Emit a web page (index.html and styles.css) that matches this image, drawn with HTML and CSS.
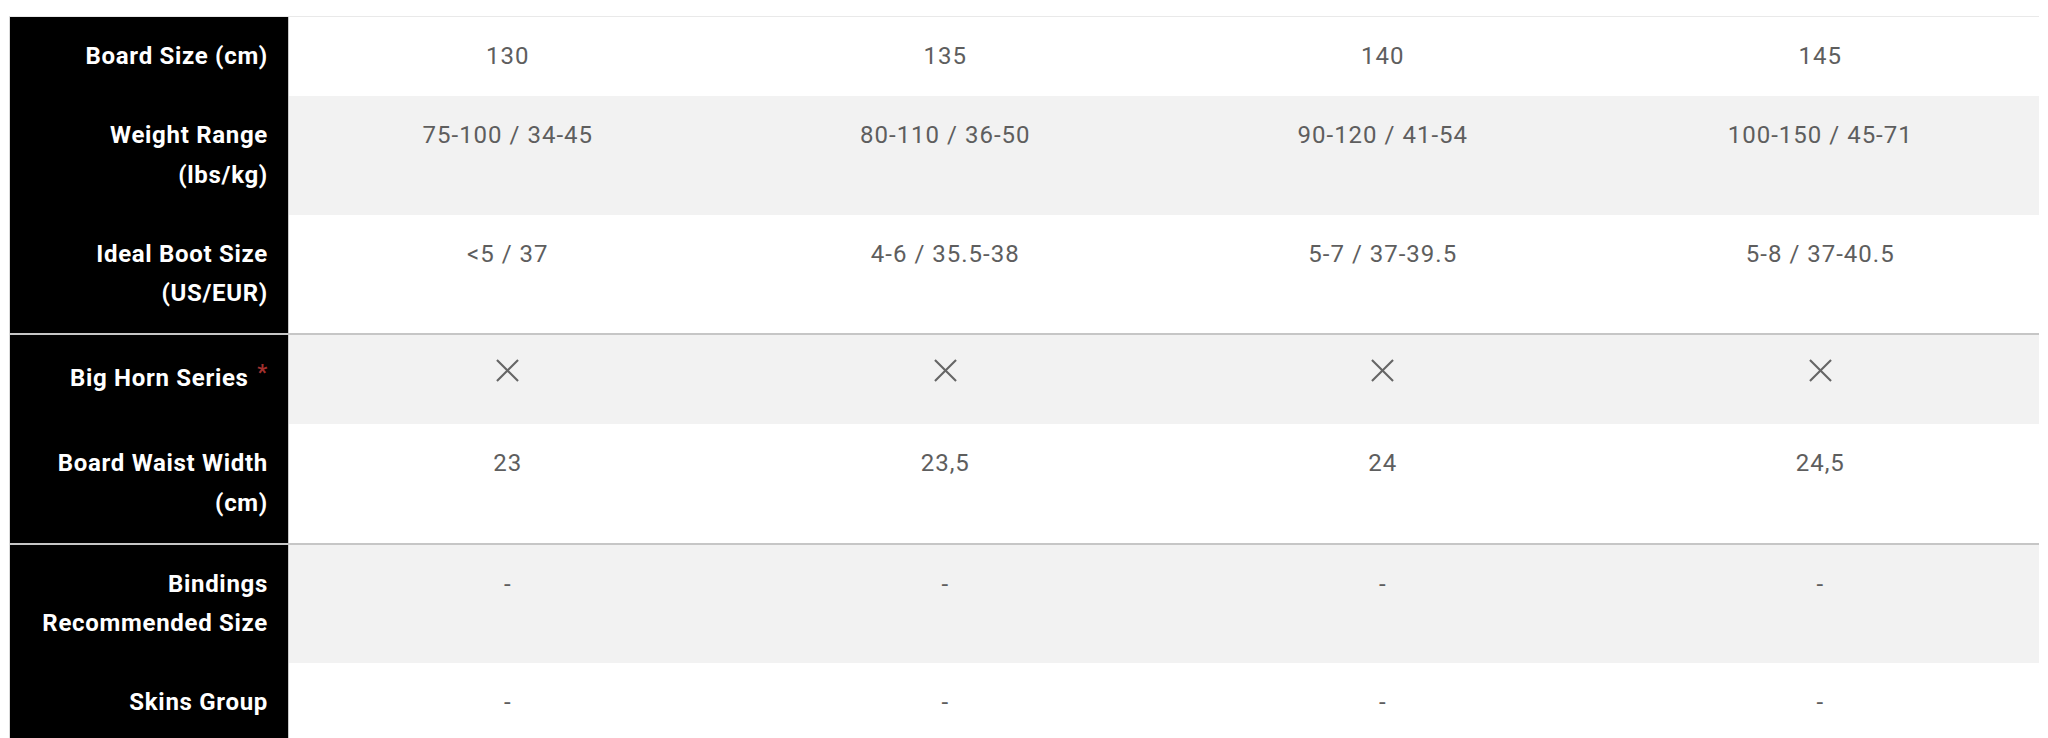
FILE: index.html
```html
<!DOCTYPE html>
<html lang="en">
<head>
<meta charset="utf-8">
<title>Size Chart</title>
<link rel="stylesheet" href="styles.css">
</head>
<body>
<div class="chart">
  <div class="row">
    <div class="label">Board Size (cm)</div>
    <div class="cell">130</div>
    <div class="cell">135</div>
    <div class="cell">140</div>
    <div class="cell">145</div>
  </div>
  <div class="row alt">
    <div class="label">Weight Range<br>(lbs/kg)</div>
    <div class="cell">75-100 / 34-45</div>
    <div class="cell">80-110 / 36-50</div>
    <div class="cell">90-120 / 41-54</div>
    <div class="cell">100-150 / 45-71</div>
  </div>
  <div class="row">
    <div class="label">Ideal Boot Size<br>(US/EUR)</div>
    <div class="cell">&lt;5 / 37</div>
    <div class="cell">4-6 / 35.5-38</div>
    <div class="cell">5-7 / 37-39.5</div>
    <div class="cell">5-8 / 37-40.5</div>
  </div>
  <div class="row alt section icon-row">
    <div class="label">Big Horn Series <sup class="req">*</sup></div>
    <div class="cell"><svg class="x" viewBox="0 0 24 24"><path d="M1 1L23 23M23 1L1 23"/></svg></div>
    <div class="cell"><svg class="x" viewBox="0 0 24 24"><path d="M1 1L23 23M23 1L1 23"/></svg></div>
    <div class="cell"><svg class="x" viewBox="0 0 24 24"><path d="M1 1L23 23M23 1L1 23"/></svg></div>
    <div class="cell"><svg class="x" viewBox="0 0 24 24"><path d="M1 1L23 23M23 1L1 23"/></svg></div>
  </div>
  <div class="row">
    <div class="label">Board Waist Width<br>(cm)</div>
    <div class="cell">23</div>
    <div class="cell">23,5</div>
    <div class="cell">24</div>
    <div class="cell">24,5</div>
  </div>
  <div class="row alt section">
    <div class="label">Bindings<br>Recommended Size</div>
    <div class="cell">-</div>
    <div class="cell">-</div>
    <div class="cell">-</div>
    <div class="cell">-</div>
  </div>
  <div class="row">
    <div class="label">Skins Group</div>
    <div class="cell">-</div>
    <div class="cell">-</div>
    <div class="cell">-</div>
    <div class="cell">-</div>
  </div>
</div>
</body>
</html>
```
FILE: styles.css
```css
html, body {
  margin: 0;
  padding: 0;
  background: #fff;
}

body {
  font-family: Roboto, "Liberation Sans", sans-serif;
}

.chart {
  margin: 16px 0 0 9px;
  width: 2029px;
  border-left: 1px solid #d9d9d9;
  border-top: 1px solid #e9e9e9;
}

.row {
  display: grid;
  grid-template-columns: 279px repeat(4, 1fr);
  background: #fff;
}

.row.alt {
  background: #f2f2f2;
}

.row.section {
  border-top: 2px solid #c6c6c6;
}

.label {
  background: #000;
  color: #fff;
  font-weight: 700;
  font-size: 24px;
  line-height: 39.5px;
  letter-spacing: 0.7px;
  text-align: right;
  padding: 20px 20px 19.5px 12px;
  border-right: 1px solid #c8c8c8;
}

.cell {
  color: #5e5e5e;
  font-size: 24px;
  line-height: 39.5px;
  letter-spacing: 1px;
  text-align: center;
  padding: 20px 10px 19.5px;
}

.icon-row .label {
  padding-top: 24px;
  padding-bottom: 25.5px;
}

.icon-row .cell {
  padding-top: 24px;
  padding-bottom: 0;
}

.x {
  display: block;
  width: 23px;
  height: 23px;
  margin: 0 auto;
  fill: none;
  stroke: #666;
  stroke-width: 2.2;
}

.req {
  color: #a3302e;
  font-size: 22px;
  font-weight: 700;
  line-height: 0;
  vertical-align: 6px;
  margin-left: 2px;
}
```
